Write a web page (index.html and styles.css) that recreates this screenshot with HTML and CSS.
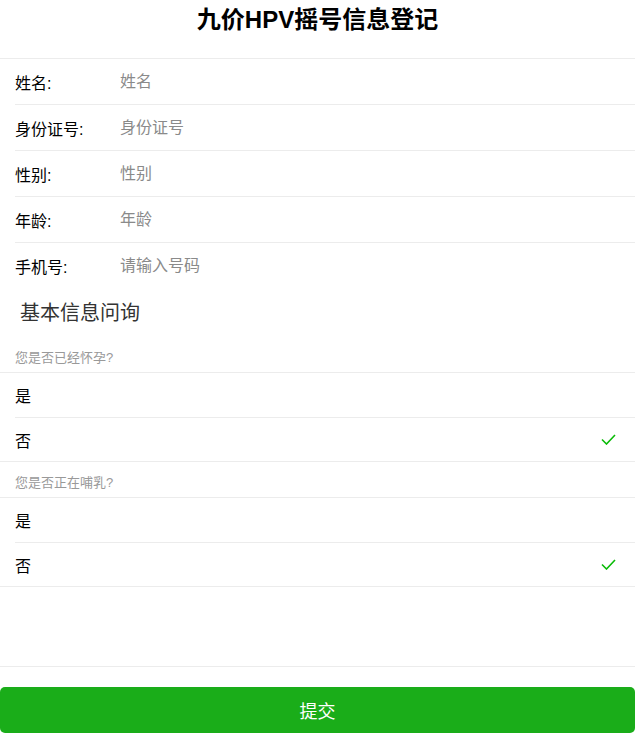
FILE: index.html
```html
<!DOCTYPE html>
<html lang="zh-CN">
<head>
    <meta charset="UTF-8">
    <title>九价HPV摇号信息登记</title>
    <link rel="stylesheet" href="styles.css">
</head>
<body>
<div class="page">
    <h1 class="title">九价HPV摇号信息登记</h1>

    <div class="cells form-cells">
        <div class="cell">
            <label class="label">姓名:</label>
            <input class="input" type="text" placeholder="姓名">
        </div>
        <div class="cell">
            <label class="label">身份证号:</label>
            <input class="input" type="text" placeholder="身份证号">
        </div>
        <div class="cell">
            <label class="label">性别:</label>
            <input class="input" type="text" placeholder="性别">
        </div>
        <div class="cell">
            <label class="label">年龄:</label>
            <input class="input" type="text" placeholder="年龄">
        </div>
        <div class="cell">
            <label class="label">手机号:</label>
            <input class="input" type="tel" placeholder="请输入号码">
        </div>
    </div>

    <div class="section-title">基本信息问询</div>

    <div class="cells-title">您是否已经怀孕?</div>
    <div class="cells radio-cells">
        <label class="cell radio">
            <span class="cell-text">是</span>
        </label>
        <label class="cell radio checked">
            <span class="cell-text">否</span>
            <svg class="check" width="15" height="11" viewBox="0 0 15 11"><path d="M1 5.5 L5.5 10 L14 1" fill="none" stroke="#09bb07" stroke-width="1.6"/></svg>
        </label>
    </div>

    <div class="cells-title">您是否正在哺乳?</div>
    <div class="cells radio-cells">
        <label class="cell radio">
            <span class="cell-text">是</span>
        </label>
        <label class="cell radio checked">
            <span class="cell-text">否</span>
            <svg class="check" width="15" height="11" viewBox="0 0 15 11"><path d="M1 5.5 L5.5 10 L14 1" fill="none" stroke="#09bb07" stroke-width="1.6"/></svg>
        </label>
    </div>

    <div class="blank"></div>

    <button class="btn-primary">提交</button>
</div>
</body>
</html>
```

FILE: styles.css
```css
body {
    margin: 0;
    background: #fff;
    font-family: "Liberation Sans", "Noto Sans CJK SC", sans-serif;
    color: #000;
}
.page { width: 635px; }
.title {
    margin: 0 0 18px;
    height: 40px;
    line-height: 40px;
    font-size: 24px;
    font-weight: bold;
    text-align: center;
}
.cells {
    border-top: 1px solid #ececec;
}
.cell {
    display: flex;
    align-items: center;
    padding: 0 15px;
    font-size: 16px;
}
.form-cells .cell {
    height: 45px;
}
.form-cells .cell + .cell,
.radio-cells .cell + .cell {
    border-top: 1px solid #ececec;
    margin-left: 15px;
    padding-left: 0;
}
.label {
    width: 105px;
    flex-shrink: 0;
}
.input {
    flex: 1;
    border: 0;
    outline: 0;
    padding: 0;
    font-size: 16px;
    font-family: inherit;
    color: #000;
    background: transparent;
}
.input::placeholder { color: #8a8a8a; }
.section-title {
    padding: 11px 20px 10px;
    line-height: 28px;
    font-size: 20px;
    color: #333;
}
.cells-title {
    margin: 11px 0 5px;
    padding: 0 15px;
    line-height: 19px;
    font-size: 13px;
    color: #999;
}
.radio-cells {
    border-bottom: 1px solid #ececec;
}
.radio-cells .cell {
    height: 44px;
    justify-content: space-between;
}
.radio-cells .cell + .cell {
    height: 43px;
}
.check { margin-right: 4px; }
.blank {
    height: 79px;
    border-bottom: 1px solid #ececec;
}
.btn-primary {
    display: block;
    width: 100%;
    height: 46px;
    margin-top: 20px;
    border: 0;
    border-radius: 5px;
    background: #1aad19;
    color: #fff;
    font-size: 18px;
    font-family: inherit;
}
```
